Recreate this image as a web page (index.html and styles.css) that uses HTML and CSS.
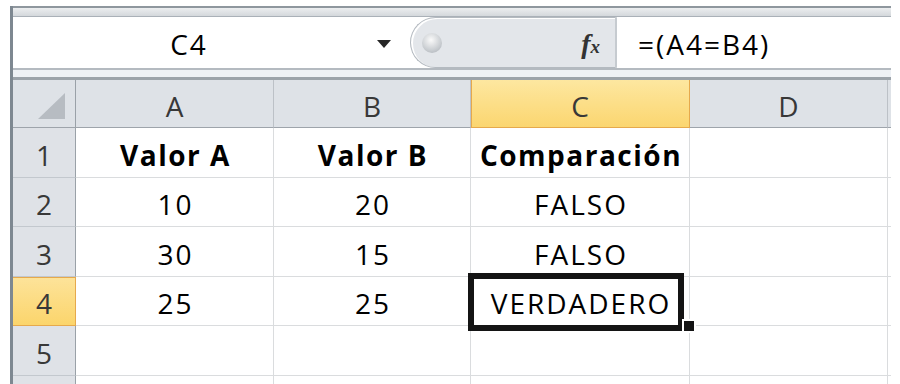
FILE: index.html
```html
<!DOCTYPE html>
<html>
<head>
<meta charset="utf-8">
<title>Comparación</title>
<link rel="stylesheet" href="styles.css">
</head>
<body>
<div class="window">
  <div class="toolbar"></div>
  <div class="fbar">
    <div class="namebox"><span class="ref">C4</span><span class="drop"></span></div>
    <div class="fxpanel"><span class="knob"></span><i class="fx">f<small>x</small></i></div>
    <div class="formula">=(A4=B4)</div>
  </div>
  <div class="sep"></div>
  <div class="sheet">
    <div class="corner"><span class="tri"></span></div>
    <div class="head">A</div>
    <div class="head">B</div>
    <div class="head on">C</div>
    <div class="head">D</div>
    <div class="head edge"></div>

    <div class="rowhead">1</div>
    <div class="cell bold">Valor A</div>
    <div class="cell bold">Valor B</div>
    <div class="cell bold">Comparación</div>
    <div class="cell"></div>
    <div class="cell edge"></div>

    <div class="rowhead">2</div>
    <div class="cell">10</div>
    <div class="cell">20</div>
    <div class="cell">FALSO</div>
    <div class="cell"></div>
    <div class="cell edge"></div>

    <div class="rowhead">3</div>
    <div class="cell">30</div>
    <div class="cell">15</div>
    <div class="cell">FALSO</div>
    <div class="cell"></div>
    <div class="cell edge"></div>

    <div class="rowhead on">4</div>
    <div class="cell">25</div>
    <div class="cell">25</div>
    <div class="cell">VERDADERO</div>
    <div class="cell"></div>
    <div class="cell edge"></div>

    <div class="rowhead">5</div>
    <div class="cell"></div>
    <div class="cell"></div>
    <div class="cell"></div>
    <div class="cell"></div>
    <div class="cell edge"></div>

    <!-- fila 6: sólo se ve el borde superior -->
    <div class="rowhead"></div>
    <div class="cell"></div>
    <div class="cell"></div>
    <div class="cell"></div>
    <div class="cell"></div>
    <div class="cell edge"></div>

    <!-- selección activa sobre C4 -->
    <div class="sel"></div>
    <div class="handle"></div>
  </div>
</div>
</body>
</html>
```

FILE: styles.css
```css
body { margin: 0; background: #fff; font-family: "Open Sans", "Noto Sans", sans-serif; color: #000; }
.window { width: 881px; height: 378px; margin: 6px 0 0 10px; border-left: 3px solid #7e8891; box-sizing: border-box; overflow: hidden; }

.toolbar { height: 11px; box-sizing: border-box; border-top: 2px solid #8f979e; border-bottom: 1px solid #aab1b8; background: linear-gradient(#eceef0, #d4d8dc); }

.fbar { display: flex; height: 51px; background: #fff; }
.namebox { display: flex; align-items: center; width: 397px; }
.ref { width: 350px; padding: 3px 0 0 2px; box-sizing: border-box; text-align: center; font-size: 28px; letter-spacing: 2px; }
.drop { width: 0; height: 0; margin: 3px 0 0 14px; border-left: 7px solid transparent; border-right: 7px solid transparent; border-top: 8px solid #262626; }
.fxpanel { display: flex; align-items: center; justify-content: space-between; width: 207px; padding: 0 15px 0 11px; box-sizing: border-box; border: 1px solid #b4bac0; border-right: 2px solid #c6cbd0; border-radius: 26px 0 0 26px; background: #e3e6ea; box-shadow: inset 2px 1px 0 #fff; }
.knob { width: 20px; height: 20px; border-radius: 50%; background: radial-gradient(circle at 45% 35%, #fafafa, #c9cdd1 60%, #a6abb1); }
.fx { font: italic bold 28px "Liberation Serif", serif; color: #333; padding-top: 2px; }
.fx small { font-size: 19px; }
.formula { display: flex; align-items: center; flex: 1; padding: 3px 0 0 21px; font-size: 28px; letter-spacing: 2px; }

.sep { height: 12px; box-sizing: border-box; border-top: 2px solid #b4bac0; border-bottom: 3px solid #9ca3aa; background: #eef1f5; }

.sheet { position: relative; display: grid; grid-template-columns: 63px 198px 197px 219px 198px 1fr; grid-template-rows: 48px 50px 49px 50px 49px 50px 50px; }
.sheet > div { display: flex; align-items: center; justify-content: center; box-sizing: border-box; font-size: 28px; letter-spacing: 2px; padding: 4px 0 0 2px; }

.corner,
.head { background: #dee2e7; border-right: 1px solid #bcc1c7; border-bottom: 1px solid #9ea4ab; color: #383838; }
.sheet > .corner { align-items: flex-end; justify-content: flex-end; padding: 0 10px 8px 0; border-right-color: #9aa1a8; }
.tri { width: 27px; height: 26px; background: #b7bcc2; clip-path: polygon(100% 0, 100% 100%, 0 100%); }
.head.on { background: linear-gradient(#fde7a0, #fbd670); border-right-color: #e6a94c; border-bottom-color: #e6a94c; box-shadow: inset 1px 0 0 #e6a94c; }
.head.edge { border-right: 0; }

.rowhead { background: #dfe2e7; border-right: 1px solid #9aa1a8; border-bottom: 1px solid #c3c8ce; color: #383838; }
.rowhead.on { background: linear-gradient(#fde39a, #fbd56c); border-right-color: #e6a94c; border-bottom-color: #e6a94c; box-shadow: inset 0 1px 0 #e6a94c; }

.cell { border-right: 1px solid #dadcde; border-bottom: 1px solid #dadcde; }
.cell.edge { border-right: 0; }
.sheet > .bold { font-weight: bold; letter-spacing: 1.5px; }

.sel { position: absolute; left: 455px; top: 193px; width: 216px; height: 58px; border: 6px solid #141414; box-sizing: border-box; }
.handle { position: absolute; left: 669px; top: 239px; width: 14px; height: 14px; border: 2px solid #fff; box-sizing: border-box; background: #141414; }
```
